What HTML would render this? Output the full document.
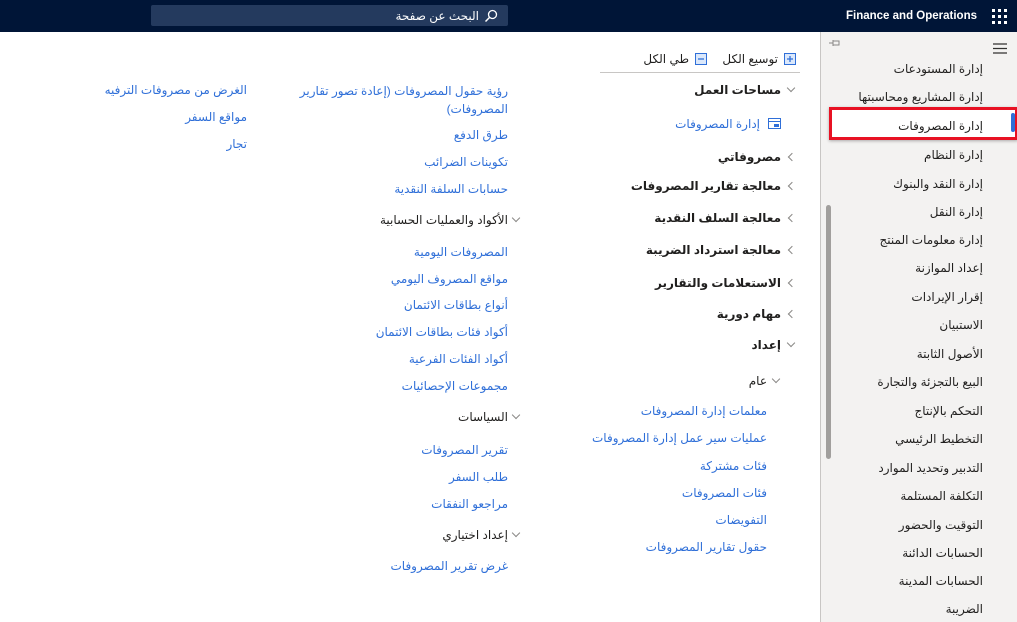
<!DOCTYPE html>
<html lang="ar" dir="rtl"><head><meta charset="utf-8">
<style>
*{margin:0;padding:0;box-sizing:border-box}
body{width:1017px;height:622px;overflow:hidden;background:#fff;font-family:"Liberation Sans","DejaVu Sans","Noto Sans CJK SC",sans-serif;font-size:12px;color:#201f1e;position:relative}
.top{position:absolute;left:0;top:0;width:1017px;height:32px;background:#001537}
.search{position:absolute;left:151px;top:5px;width:357px;height:21px;background:#243a5e;border-radius:2px}
.t{position:absolute;white-space:nowrap;line-height:18px;direction:rtl}
.l{color:#2f6fd8}
.b{font-weight:600}
.nav{position:absolute;left:820px;top:32px;width:197px;height:590px;background:#f3f2f1;border-left:1px solid #c8c6c4}
.chev{position:absolute;width:6px;height:6px;border-left:1px solid #8a8886;border-bottom:1px solid #8a8886}
.cl{transform:rotate(45deg)}
.cd{transform:rotate(-45deg)}
</style></head><body>
<div class="top">
 <div class="search"></div>
 <div class="t" style="top:7px;right:538px;color:#fff;font-size:12px">البحث عن صفحة</div>
 <svg style="position:absolute;left:484px;top:9px" width="14" height="14" viewBox="0 0 14 14"><circle cx="8.5" cy="5.5" r="4" fill="none" stroke="#fff" stroke-width="1.3"/><line x1="5.6" y1="8.4" x2="1.5" y2="12.5" stroke="#fff" stroke-width="1.5"/></svg>
 <div class="t" style="top:7px;left:846px;direction:ltr;color:#fff;font-weight:bold;font-size:11.5px">Finance and Operations</div>
 <svg style="position:absolute;left:992px;top:9px" width="15" height="15" viewBox="0 0 15 15" fill="#fff"><rect x="0" y="0" width="3" height="3"/><rect x="6" y="0" width="3" height="3"/><rect x="12" y="0" width="3" height="3"/><rect x="0" y="6" width="3" height="3"/><rect x="6" y="6" width="3" height="3"/><rect x="12" y="6" width="3" height="3"/><rect x="0" y="12" width="3" height="3"/><rect x="6" y="12" width="3" height="3"/><rect x="12" y="12" width="3" height="3"/></svg>
</div>

<div class="nav">
 <svg style="position:absolute;left:8px;top:7px" width="12" height="8" viewBox="0 0 12 8"><path d="M0 4h4M4 1v6M4 2h6v4H4" fill="none" stroke="#8a8886" stroke-width="1"/></svg>
 <svg style="position:absolute;left:172px;top:11px" width="14" height="11" viewBox="0 0 14 11"><path d="M0 1h14M0 5.5h14M0 10h14" stroke="#323130" stroke-width="1.2"/></svg>
 <div style="position:absolute;left:5px;top:173px;width:5px;height:254px;background:#a19f9d;border-radius:3px"></div>
 <div style="position:absolute;left:8px;top:75px;width:189px;height:33px;border:3px solid #e81123;background:#fff;box-shadow:0 1px 3px rgba(0,0,0,.3)"></div>
 <div style="position:absolute;left:190px;top:81px;width:4px;height:19px;background:#2f6fd8;border-radius:2px"></div>
</div>
<div class="t" style="top:60px;right:34px">إدارة المستودعات</div>
<div class="t" style="top:88px;right:34px">إدارة المشاريع ومحاسبتها</div>
<div class="t" style="top:117px;right:34px">إدارة المصروفات</div>
<div class="t" style="top:146px;right:34px">إدارة النظام</div>
<div class="t" style="top:175px;right:34px">إدارة النقد والبنوك</div>
<div class="t" style="top:203px;right:34px">إدارة النقل</div>
<div class="t" style="top:231px;right:34px">إدارة معلومات المنتج</div>
<div class="t" style="top:259px;right:34px">إعداد الموازنة</div>
<div class="t" style="top:288px;right:34px">إقرار الإيرادات</div>
<div class="t" style="top:316px;right:34px">الاستبيان</div>
<div class="t" style="top:345px;right:34px">الأصول الثابتة</div>
<div class="t" style="top:373px;right:34px">البيع بالتجزئة والتجارة</div>
<div class="t" style="top:402px;right:34px">التحكم بالإنتاج</div>
<div class="t" style="top:430px;right:34px">التخطيط الرئيسي</div>
<div class="t" style="top:459px;right:34px">التدبير وتحديد الموارد</div>
<div class="t" style="top:487px;right:34px">التكلفة المستلمة</div>
<div class="t" style="top:516px;right:34px">التوقيت والحضور</div>
<div class="t" style="top:544px;right:34px">الحسابات الدائنة</div>
<div class="t" style="top:572px;right:34px">الحسابات المدينة</div>
<div class="t" style="top:600px;right:34px">الضريبة</div>

<!-- middle column -->
<svg style="position:absolute;left:784px;top:53px" width="12" height="12" viewBox="0 0 12 12"><rect x=".5" y=".5" width="11" height="11" fill="#dbe8fb" stroke="#2f6fd8"/><path d="M3 6h6M6 3v6" stroke="#2f6fd8" stroke-width="1.3"/></svg>
<div class="t" style="top:50px;right:239px">توسيع الكل</div>
<svg style="position:absolute;left:695px;top:53px" width="12" height="12" viewBox="0 0 12 12"><rect x=".5" y=".5" width="11" height="11" fill="#dbe8fb" stroke="#2f6fd8"/><path d="M3 6h6" stroke="#2f6fd8" stroke-width="1.3"/></svg>
<div class="t" style="top:50px;right:328px">طي الكل</div>
<div style="position:absolute;left:600px;top:72px;width:200px;height:1px;background:#c8c6c4"></div>

<div class="chev cd" style="left:788px;top:85px"></div>
<div class="t b" style="top:81px;right:236px">مساحات العمل</div>
<svg style="position:absolute;left:768px;top:118px" width="13" height="11" viewBox="0 0 13 11"><rect x=".5" y=".5" width="12" height="10" fill="none" stroke="#2f6fd8"/><path d="M.5 3.5h12" stroke="#2f6fd8"/><rect x="6" y="6" width="5" height="3" fill="#2f6fd8"/></svg>
<div class="t l" style="top:115px;right:257px">إدارة المصروفات</div>

<div class="chev cl" style="left:789px;top:154px"></div>
<div class="t b" style="top:148px;right:236px">مصروفاتي</div>
<div class="chev cl" style="left:789px;top:183px"></div>
<div class="t b" style="top:177px;right:236px">معالجة تقارير المصروفات</div>
<div class="chev cl" style="left:789px;top:215px"></div>
<div class="t b" style="top:209px;right:236px">معالجة السلف النقدية</div>
<div class="chev cl" style="left:789px;top:247px"></div>
<div class="t b" style="top:241px;right:236px">معالجة استرداد الضريبة</div>
<div class="chev cl" style="left:789px;top:280px"></div>
<div class="t b" style="top:274px;right:236px">الاستعلامات والتقارير</div>
<div class="chev cl" style="left:789px;top:311px"></div>
<div class="t b" style="top:305px;right:236px">مهام دورية</div>
<div class="chev cd" style="left:788px;top:340px"></div>
<div class="t b" style="top:336px;right:236px">إعداد</div>
<div class="chev cd" style="left:773px;top:376px"></div>
<div class="t" style="top:372px;right:250px">عام</div>
<div class="t l" style="top:402px;right:250px">معلمات إدارة المصروفات</div>
<div class="t l" style="top:429px;right:250px">عمليات سير عمل إدارة المصروفات</div>
<div class="t l" style="top:457px;right:250px">فئات مشتركة</div>
<div class="t l" style="top:484px;right:250px">فئات المصروفات</div>
<div class="t l" style="top:511px;right:250px">التفويضات</div>
<div class="t l" style="top:538px;right:250px">حقول تقارير المصروفات</div>

<!-- column 2 -->
<div class="t l" style="top:82px;right:509px;white-space:normal;width:215px;line-height:18px">رؤية حقول المصروفات (إعادة تصور تقارير المصروفات)</div>
<div class="t l" style="top:126px;right:509px">طرق الدفع</div>
<div class="t l" style="top:153px;right:509px">تكوينات الضرائب</div>
<div class="t l" style="top:180px;right:509px">حسابات السلفة النقدية</div>
<div class="chev cd" style="left:513px;top:215px"></div>
<div class="t" style="top:211px;right:509px">الأكواد والعمليات الحسابية</div>
<div class="t l" style="top:243px;right:509px">المصروفات اليومية</div>
<div class="t l" style="top:270px;right:509px">مواقع المصروف اليومي</div>
<div class="t l" style="top:296px;right:509px">أنواع بطاقات الائتمان</div>
<div class="t l" style="top:323px;right:509px">أكواد فئات بطاقات الائتمان</div>
<div class="t l" style="top:350px;right:509px">أكواد الفئات الفرعية</div>
<div class="t l" style="top:377px;right:509px">مجموعات الإحصائيات</div>
<div class="chev cd" style="left:513px;top:412px"></div>
<div class="t" style="top:408px;right:509px">السياسات</div>
<div class="t l" style="top:441px;right:509px">تقرير المصروفات</div>
<div class="t l" style="top:468px;right:509px">طلب السفر</div>
<div class="t l" style="top:495px;right:509px">مراجعو النفقات</div>
<div class="chev cd" style="left:513px;top:530px"></div>
<div class="t" style="top:526px;right:509px">إعداد اختياري</div>
<div class="t l" style="top:557px;right:509px">غرض تقرير المصروفات</div>

<!-- column 3 -->
<div class="t l" style="top:81px;right:770px">الغرض من مصروفات الترفيه</div>
<div class="t l" style="top:108px;right:770px">مواقع السفر</div>
<div class="t l" style="top:135px;right:770px">تجار</div>
</body></html>
